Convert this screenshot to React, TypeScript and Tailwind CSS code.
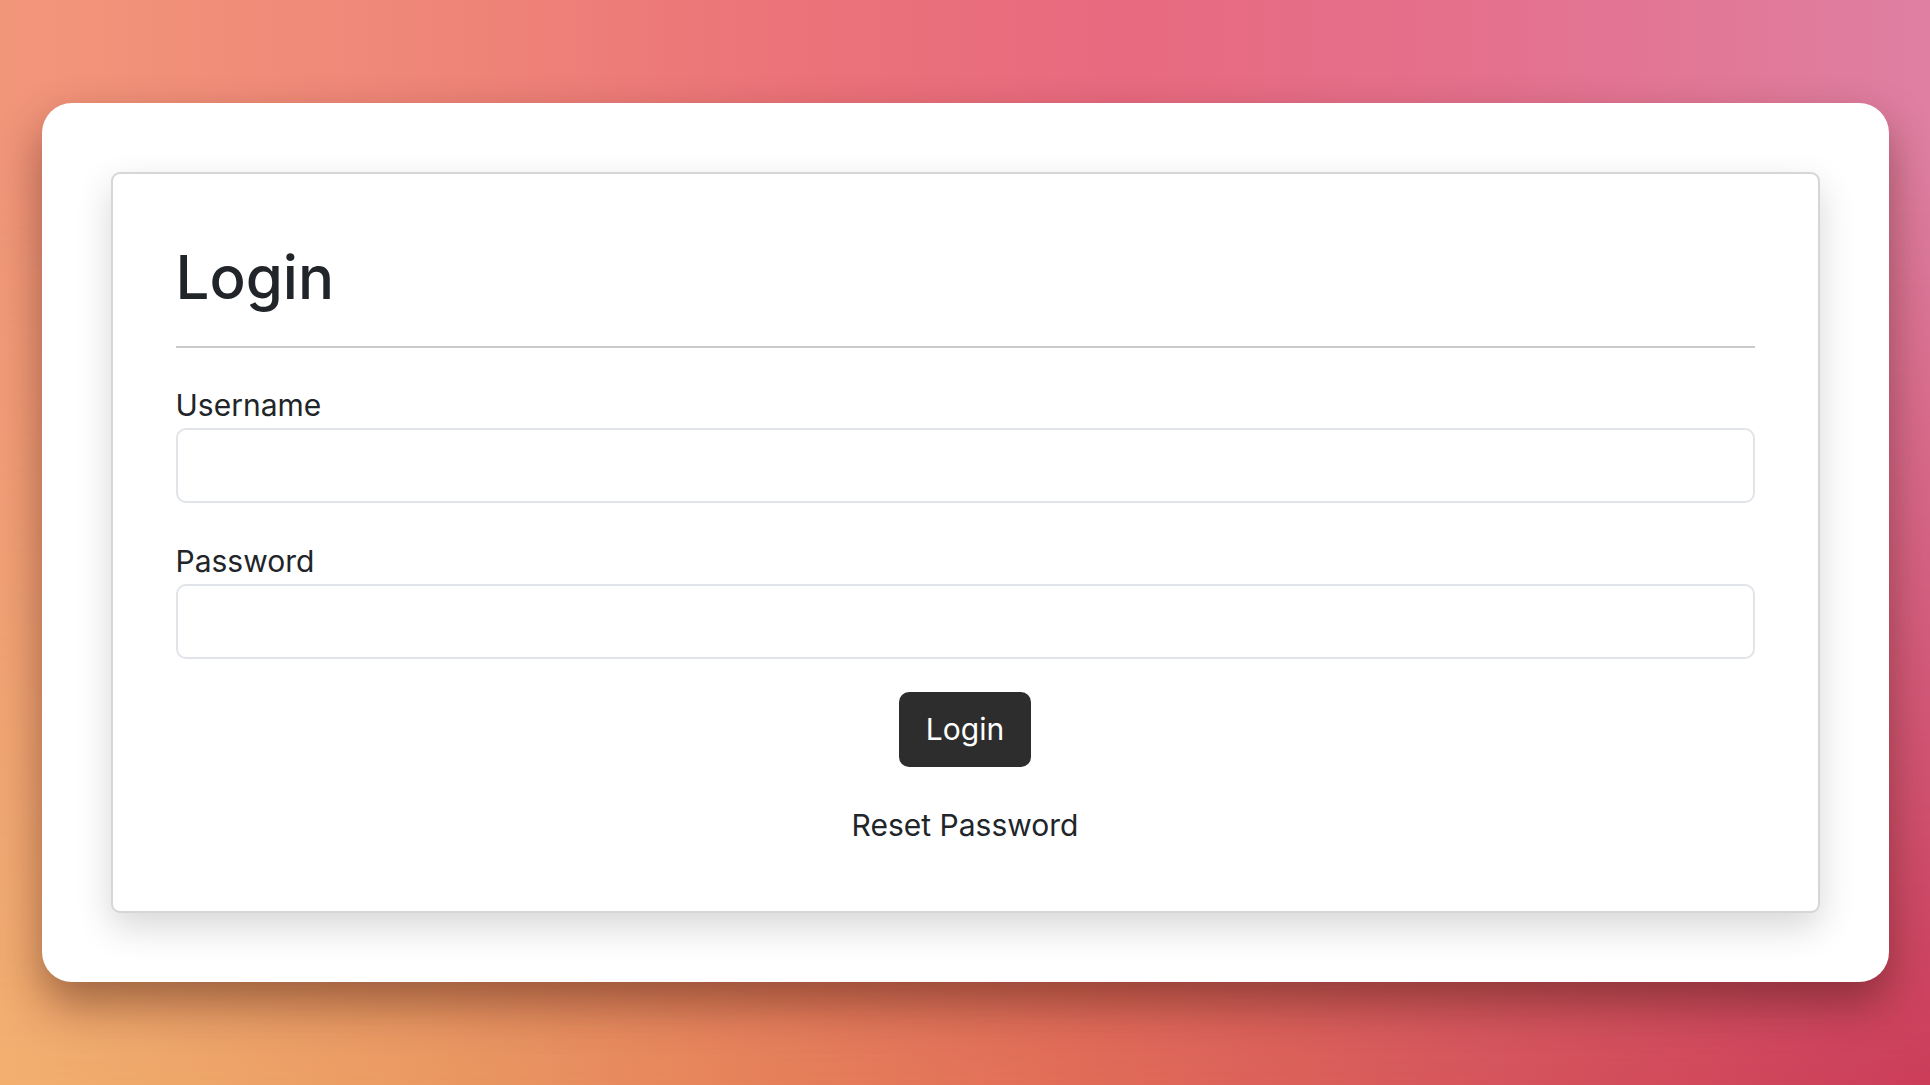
export default function App() {
  return (
    <div
      className="h-screen w-full flex items-center justify-center relative overflow-hidden bg-[linear-gradient(to_right,#f2b070_0%,#ea9a62_22%,#e57e5a_42%,#e06a58_58%,#d5545c_78%,#cc3d5a_100%)]"
      style={{ fontFamily: "Inter, 'Noto Sans', sans-serif" }}
    >
      <div className="absolute inset-0 bg-[linear-gradient(to_right,#f2967a_0%,#ef8678_22%,#eb7279_42%,#e86a80_58%,#e4718e_78%,#df7fa2_100%)] [mask-image:linear-gradient(to_bottom,black_0%,black_15%,transparent_100%)]" />
      <div className="relative w-[1847px] bg-white rounded-[30px] p-[69px] shadow-[0_22px_45px_rgba(60,20,10,0.45)]">
        <div className="bg-white border-2 border-[#d6d6d6] rounded-[9px] px-[63px] pt-[66px] pb-[63px] shadow-[0_14px_36px_rgba(0,0,0,0.16)] text-[#212529]">
          <h1 className="text-[60px] leading-[74px] font-medium">Login</h1>
          <hr className="mt-[32px] border-0 h-[2px] bg-[#cbcbcb]" />
          <div className="mt-[35px]">
            <label className="block text-[30px] leading-[45px]">Username</label>
            <input
              type="text"
              className="block w-full h-[75px] border-2 border-[#e1e4e8] rounded-[10px] px-4 text-[30px] outline-none"
            />
          </div>
          <div className="mt-[36px]">
            <label className="block text-[30px] leading-[45px]">Password</label>
            <input
              type="password"
              className="block w-full h-[75px] border-2 border-[#e1e4e8] rounded-[10px] px-4 text-[30px] outline-none"
            />
          </div>
          <div className="mt-[33px] flex justify-center">
            <button className="h-[75px] w-[132px] bg-[#2d2d2d] text-white text-[30px] rounded-[10px]">
              Login
            </button>
          </div>
          <div className="mt-[36px] text-center">
            <a className="text-[30px] leading-[45px] text-[#212529] cursor-pointer">Reset Password</a>
          </div>
        </div>
      </div>
    </div>
  );
}
